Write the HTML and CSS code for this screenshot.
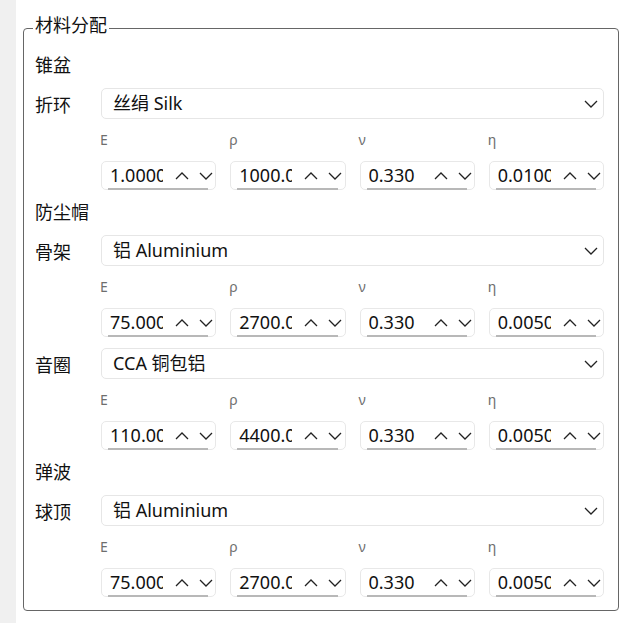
FILE: index.html
```html
<!DOCTYPE html>
<html lang="zh-CN">
<head>
<meta charset="UTF-8" />
<title>材料分配</title>
<link rel="stylesheet" href="styles.css">
</head>
<body>
<div class="side"></div>
<div class="main">
  <fieldset class="group">
    <legend>材料分配</legend>
    <div class="rows">

      <div class="section">锥盆</div>
      <div class="row">
        <span class="label">折环</span>
        <div class="combo"><span>丝绢 Silk</span><svg class="chev" width="14" height="8" viewBox="0 0 14 8"><polyline points="1,1 7,7 13,1" /></svg></div>
      </div>
      <div class="params">
        <span class="pname">E</span><span class="pname">ρ</span><span class="pname">ν</span><span class="pname">η</span>
        <div class="spin"><span class="val">1.0000</span><svg class="chev" width="14" height="8" viewBox="0 0 14 8"><polyline points="1,7 7,1 13,7" /></svg><svg class="chev" width="14" height="8" viewBox="0 0 14 8"><polyline points="1,1 7,7 13,1" /></svg></div>
        <div class="spin"><span class="val">1000.0</span><svg class="chev" width="14" height="8" viewBox="0 0 14 8"><polyline points="1,7 7,1 13,7" /></svg><svg class="chev" width="14" height="8" viewBox="0 0 14 8"><polyline points="1,1 7,7 13,1" /></svg></div>
        <div class="spin"><span class="val">0.330</span><svg class="chev" width="14" height="8" viewBox="0 0 14 8"><polyline points="1,7 7,1 13,7" /></svg><svg class="chev" width="14" height="8" viewBox="0 0 14 8"><polyline points="1,1 7,7 13,1" /></svg></div>
        <div class="spin"><span class="val">0.0100</span><svg class="chev" width="14" height="8" viewBox="0 0 14 8"><polyline points="1,7 7,1 13,7" /></svg><svg class="chev" width="14" height="8" viewBox="0 0 14 8"><polyline points="1,1 7,7 13,1" /></svg></div>
      </div>

      <div class="section">防尘帽</div>
      <div class="row">
        <span class="label">骨架</span>
        <div class="combo"><span>铝 Aluminium</span><svg class="chev" width="14" height="8" viewBox="0 0 14 8"><polyline points="1,1 7,7 13,1" /></svg></div>
      </div>
      <div class="params">
        <span class="pname">E</span><span class="pname">ρ</span><span class="pname">ν</span><span class="pname">η</span>
        <div class="spin"><span class="val">75.000</span><svg class="chev" width="14" height="8" viewBox="0 0 14 8"><polyline points="1,7 7,1 13,7" /></svg><svg class="chev" width="14" height="8" viewBox="0 0 14 8"><polyline points="1,1 7,7 13,1" /></svg></div>
        <div class="spin"><span class="val">2700.0</span><svg class="chev" width="14" height="8" viewBox="0 0 14 8"><polyline points="1,7 7,1 13,7" /></svg><svg class="chev" width="14" height="8" viewBox="0 0 14 8"><polyline points="1,1 7,7 13,1" /></svg></div>
        <div class="spin"><span class="val">0.330</span><svg class="chev" width="14" height="8" viewBox="0 0 14 8"><polyline points="1,7 7,1 13,7" /></svg><svg class="chev" width="14" height="8" viewBox="0 0 14 8"><polyline points="1,1 7,7 13,1" /></svg></div>
        <div class="spin"><span class="val">0.0050</span><svg class="chev" width="14" height="8" viewBox="0 0 14 8"><polyline points="1,7 7,1 13,7" /></svg><svg class="chev" width="14" height="8" viewBox="0 0 14 8"><polyline points="1,1 7,7 13,1" /></svg></div>
      </div>
      <div class="row">
        <span class="label">音圈</span>
        <div class="combo"><span>CCA 铜包铝</span><svg class="chev" width="14" height="8" viewBox="0 0 14 8"><polyline points="1,1 7,7 13,1" /></svg></div>
      </div>
      <div class="params">
        <span class="pname">E</span><span class="pname">ρ</span><span class="pname">ν</span><span class="pname">η</span>
        <div class="spin"><span class="val">110.00</span><svg class="chev" width="14" height="8" viewBox="0 0 14 8"><polyline points="1,7 7,1 13,7" /></svg><svg class="chev" width="14" height="8" viewBox="0 0 14 8"><polyline points="1,1 7,7 13,1" /></svg></div>
        <div class="spin"><span class="val">4400.0</span><svg class="chev" width="14" height="8" viewBox="0 0 14 8"><polyline points="1,7 7,1 13,7" /></svg><svg class="chev" width="14" height="8" viewBox="0 0 14 8"><polyline points="1,1 7,7 13,1" /></svg></div>
        <div class="spin"><span class="val">0.330</span><svg class="chev" width="14" height="8" viewBox="0 0 14 8"><polyline points="1,7 7,1 13,7" /></svg><svg class="chev" width="14" height="8" viewBox="0 0 14 8"><polyline points="1,1 7,7 13,1" /></svg></div>
        <div class="spin"><span class="val">0.0050</span><svg class="chev" width="14" height="8" viewBox="0 0 14 8"><polyline points="1,7 7,1 13,7" /></svg><svg class="chev" width="14" height="8" viewBox="0 0 14 8"><polyline points="1,1 7,7 13,1" /></svg></div>
      </div>

      <div class="section">弹波</div>
      <div class="row">
        <span class="label">球顶</span>
        <div class="combo"><span>铝 Aluminium</span><svg class="chev" width="14" height="8" viewBox="0 0 14 8"><polyline points="1,1 7,7 13,1" /></svg></div>
      </div>
      <div class="params">
        <span class="pname">E</span><span class="pname">ρ</span><span class="pname">ν</span><span class="pname">η</span>
        <div class="spin"><span class="val">75.000</span><svg class="chev" width="14" height="8" viewBox="0 0 14 8"><polyline points="1,7 7,1 13,7" /></svg><svg class="chev" width="14" height="8" viewBox="0 0 14 8"><polyline points="1,1 7,7 13,1" /></svg></div>
        <div class="spin"><span class="val">2700.0</span><svg class="chev" width="14" height="8" viewBox="0 0 14 8"><polyline points="1,7 7,1 13,7" /></svg><svg class="chev" width="14" height="8" viewBox="0 0 14 8"><polyline points="1,1 7,7 13,1" /></svg></div>
        <div class="spin"><span class="val">0.330</span><svg class="chev" width="14" height="8" viewBox="0 0 14 8"><polyline points="1,7 7,1 13,7" /></svg><svg class="chev" width="14" height="8" viewBox="0 0 14 8"><polyline points="1,1 7,7 13,1" /></svg></div>
        <div class="spin"><span class="val">0.0050</span><svg class="chev" width="14" height="8" viewBox="0 0 14 8"><polyline points="1,7 7,1 13,7" /></svg><svg class="chev" width="14" height="8" viewBox="0 0 14 8"><polyline points="1,1 7,7 13,1" /></svg></div>
      </div>

    </div>
  </fieldset>
</div>
</body>
</html>
```

FILE: styles.css
```css
body {
  margin: 0;
  display: flex;
  min-height: 623px;
  font-family: "Noto Sans", "Noto Sans CJK SC", sans-serif;
  font-size: 18px;
  color: #111;
  background: #fff;
}
.side {
  width: 16px;
  flex-shrink: 0;
  background: #f0f0f0;
}
.main {
  flex: 1;
  padding-top: 16px;
}
.group {
  margin: 0 13px 12px 7px;
  padding: 14px 14px 13px 11px;
  border: 1px solid #666;
  border-radius: 4px;
  min-width: 0;
}
.group legend {
  font-size: 18px;
  line-height: 18px;
  padding: 0 2px 6px;
  margin-left: -2px;
}
.rows {
  display: flex;
  flex-direction: column;
  gap: 11px;
}
.section {
  height: 23px;
  line-height: 23px;
}
.row {
  display: flex;
  align-items: center;
}
.label {
  width: 66px;
  flex-shrink: 0;
}
.combo {
  flex: 1;
  height: 31px;
  box-sizing: border-box;
  border: 1px solid #e6e6e6;
  border-radius: 5px;
  padding: 0 5px 0 11px;
  display: flex;
  align-items: center;
  justify-content: space-between;
  line-height: 29px;
}
.chev polyline {
  fill: none;
  stroke: #222;
  stroke-width: 1.3;
}
.params {
  margin-left: 66px;
  display: grid;
  grid-template-columns: repeat(4, 1fr);
  column-gap: 14px;
  row-gap: 11px;
}
.pname {
  font-size: 14px;
  line-height: 20px;
  height: 20px;
  color: #6e6e6e;
  margin-left: -1px;
}
.spin {
  position: relative;
  height: 29px;
  box-sizing: border-box;
  border: 1px solid #e8e8e8;
  border-radius: 5px;
  padding-left: 8px;
  display: flex;
  align-items: center;
}
.spin::after {
  content: "";
  position: absolute;
  left: 6px;
  right: 7px;
  bottom: -1px;
  height: 2px;
  background: #b8b8b8;
}
.val {
  width: 53px;
  overflow: hidden;
  white-space: nowrap;
  line-height: 27px;
  flex-shrink: 0;
}
.spin .chev {
  flex-shrink: 0;
}
.spin .chev:first-of-type {
  margin-left: 12px;
}
.spin .chev + .chev {
  margin-left: 10px;
}
```
